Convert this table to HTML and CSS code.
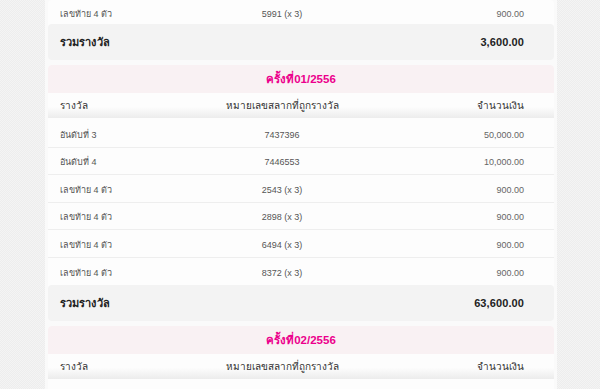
FILE: index.html
```html
<!DOCTYPE html>
<html lang="th">
<head>
<meta charset="utf-8">
<link rel="stylesheet" href="styles.css">
</head>
<body>
<div class="page">
  <div class="column">
    <section class="card card-tail">
      <div class="row first-row">
        <span>เลขท้าย 4 ตัว</span><span class="mid">5991 (x 3)</span><span class="amt">900.00</span>
      </div>
      <div class="total">
        <span>รวมรางวัล</span><span class="amt">3,600.00</span>
      </div>
    </section>

    <section class="card">
      <h2 class="title">ครั้งที่01/2556</h2>
      <div class="head">
        <span>รางวัล</span><span class="mid">หมายเลขสลากที่ถูกรางวัล</span><span class="amt">จำนวนเงิน</span>
      </div>
      <div class="rows">
        <div class="row"><span>อันดับที่ 3</span><span class="mid">7437396</span><span class="amt">50,000.00</span></div>
        <div class="row"><span>อันดับที่ 4</span><span class="mid">7446553</span><span class="amt">10,000.00</span></div>
        <div class="row"><span>เลขท้าย 4 ตัว</span><span class="mid">2543 (x 3)</span><span class="amt">900.00</span></div>
        <div class="row"><span>เลขท้าย 4 ตัว</span><span class="mid">2898 (x 3)</span><span class="amt">900.00</span></div>
        <div class="row"><span>เลขท้าย 4 ตัว</span><span class="mid">6494 (x 3)</span><span class="amt">900.00</span></div>
        <div class="row"><span>เลขท้าย 4 ตัว</span><span class="mid">8372 (x 3)</span><span class="amt">900.00</span></div>
      </div>
      <div class="total">
        <span>รวมรางวัล</span><span class="amt">63,600.00</span>
      </div>
    </section>

    <section class="card">
      <h2 class="title">ครั้งที่02/2556</h2>
      <div class="head">
        <span>รางวัล</span><span class="mid">หมายเลขสลากที่ถูกรางวัล</span><span class="amt">จำนวนเงิน</span>
      </div>
      <div class="rows"></div>
    </section>
  </div>
</div>
</body>
</html>
```

FILE: styles.css
```css
html, body {
  margin: 0;
  padding: 0;
}
body {
  height: 389px;
  overflow: hidden;
  font-family: "Liberation Sans", "DejaVu Sans", "Noto Sans", sans-serif;
  background: repeating-conic-gradient(#ededed 0 25%, #f4f4f4 0 50%) 0 0 / 2px 2px;
}
.page {
  padding-left: 45px;
}
.column {
  width: 506px;
  padding: 0 3px;
  background: #fafafa;
  min-height: 389px;
  display: flex;
  flex-direction: column;
  gap: 5px;
}
.card {
  background: #fdfdfd;
  border-radius: 4px;
}
.row, .head, .total {
  display: grid;
  grid-template-columns: 140px 164px 1fr;
  align-items: center;
  padding: 0 30px 0 12px;
}
.row .mid, .head .mid {
  text-align: center;
}
.amt {
  text-align: right;
}
.total {
  grid-template-columns: 1fr 1fr;
}
.row {
  height: 27.5px;
  box-sizing: border-box;
  padding-top: 3px;
  border-bottom: 1px solid #eeeeee;
  font-size: 9px;
  color: #555;
}
.row .amt {
  color: #666;
}
.rows {
  padding-top: 2px;
}
.rows .row:last-child {
  border-bottom: none;
}
.first-row {
  height: 24px;
  padding-top: 4px;
  border-bottom: none;
}
.total {
  height: 36px;
  background: #f3f3f3;
  border-radius: 4px;
  font-size: 11px;
  font-weight: bold;
  color: #222;
  letter-spacing: 0.1px;
}
.title {
  margin: 0;
  height: 28px;
  line-height: 28px;
  text-align: center;
  font-size: 11.5px;
  font-weight: bold;
  color: #ec008c;
  background: #f9f1f3;
  border-radius: 4px 4px 0 0;
}
.head {
  height: 25px;
  font-size: 10px;
  color: #333;
  background: linear-gradient(#fdfdfd 55%, #ececec);
}
.rows:empty {
  height: 20px;
}
```
